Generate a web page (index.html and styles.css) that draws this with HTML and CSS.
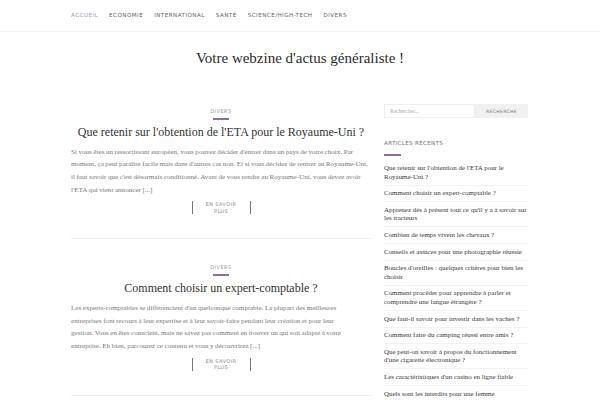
FILE: index.html
```html
<!DOCTYPE html>
<html lang="fr">
<head>
<meta charset="utf-8">
<title>Votre webzine d'actus généraliste !</title>
<link rel="stylesheet" href="styles.css">
</head>
<body>
<header class="topbar">
  <nav class="nav">
    <a class="nav-item active" href="#">Accueil</a>
    <a class="nav-item" href="#">Economie</a>
    <a class="nav-item" href="#">International</a>
    <a class="nav-item" href="#">Santé</a>
    <a class="nav-item" href="#">Science/High-Tech</a>
    <a class="nav-item" href="#">Divers</a>
  </nav>
</header>
<h1 class="site-title">Votre webzine d'actus généraliste !</h1>
<div class="wrap">
  <main class="main">
    <article class="post">
      <div class="cat">Divers</div>
      <div class="cat-line"></div>
      <h2 class="post-title">Que retenir sur l'obtention de l'ETA pour le Royaume-Uni ?</h2>
      <p class="excerpt">Si vous êtes un ressortissant européen, vous pouvez décider d'entrer dans un pays de votre choix. Par moment, ça peut paraître facile mais dans d'autres cas non. Et si vous décidez de rentrer au Royaume-Uni, il faut savoir que c'est désormais conditionné. Avant de vous rendre au Royaume-Uni, vous devez avoir l'ETA qui vient annoncer [...]</p>
      <div class="more-wrap"><a class="more" href="#">En savoir<br>plus</a></div>
    </article>
    <article class="post">
      <div class="cat">Divers</div>
      <div class="cat-line"></div>
      <h2 class="post-title">Comment choisir un expert-comptable ?</h2>
      <p class="excerpt">Les experts-comptables se différencient d'un quelconque comptable. La plupart des meilleures<br>entreprises font recours à leur expertise et à leur savoir-faire pendant leur création et pour leur<br>gestion. Vous en êtes conscient, mais ne savez pas comment en trouver un qui soit adapté à votre<br>entreprise. Eh bien, parcourez ce contenu et vous y découvrirez [...]</p>
      <div class="more-wrap"><a class="more" href="#">En savoir<br>plus</a></div>
    </article>
  </main>
  <aside class="side">
    <form class="search">
      <input class="search-input" type="text" placeholder="Rechercher...">
      <button class="search-btn" type="button">Recherche</button>
    </form>
    <h3 class="widget-title">Articles récents</h3>
    <div class="widget-line"></div>
    <ul class="recent">
      <li>Que retenir sur l'obtention de l'ETA pour le Royaume-Uni ?</li>
      <li>Comment choisir un expert-comptable ?</li>
      <li>Apprenez dès à présent tout ce qu'il y a à savoir sur les tracteurs</li>
      <li>Combien de temps vivent les chevaux ?</li>
      <li>Conseils et astuces pour une photographie réussie</li>
      <li>Boucles d'oreilles : quelques critères pour bien les choisir</li>
      <li>Comment procéder pour apprendre à parler et comprendre une langue étrangère ?</li>
      <li>Que faut-il savoir pour investir dans les vaches ?</li>
      <li>Comment faire du camping réussi entre amis ?</li>
      <li>Que peut-on savoir à propos du fonctionnement d'une cigarette électronique ?</li>
      <li>Les caractéristiques d'un casino en ligne fiable</li>
      <li>Quels sont les interdits pour une femme<br>enceinte ?</li>
    </ul>
  </aside>
</div>
</body>
</html>
```

FILE: styles.css
```css
html, body {
  margin: 0;
  padding: 0;
  background: #fff;
  overflow: hidden;
}
body {
  font-family: "Liberation Serif", "Times New Roman", serif;
  color: #333;
}
.topbar {
  height: 32px;
  border-bottom: 1px solid #f3f3f3;
  box-sizing: border-box;
}
.nav {
  display: flex;
  padding: 12px 0 0 71px;
  gap: 11px;
}
.nav-item {
  font-family: "DejaVu Sans", sans-serif;
  font-size: 5.6px;
  letter-spacing: 0.45px;
  text-transform: uppercase;
  color: #666;
  text-decoration: none;
  line-height: 7px;
}
.nav-item.active {
  color: #ad96b8;
}
.site-title {
  margin: 17px 0 0;
  text-align: center;
  font-weight: normal;
  font-size: 15px;
  line-height: 18px;
  color: #2a2a2a;
}
.wrap {
  display: flex;
  gap: 13px;
  padding-left: 71px;
  margin-top: 32px;
}
.main {
  width: 300px;
}
.post {
  border-bottom: 1px solid #eee;
  text-align: center;
  padding-top: 9px;
  padding-bottom: 24px;
}
.post + .post {
  padding-top: 25px;
}
.cat {
  font-family: "DejaVu Sans", sans-serif;
  font-size: 5px;
  letter-spacing: 0.5px;
  text-transform: uppercase;
  color: #999;
  line-height: 7px;
}
.cat-line {
  width: 16px;
  height: 1.5px;
  background: #8d6f9d;
  margin: 3px auto 0;
}
.post-title {
  margin: 4px 0 0;
  font-weight: normal;
  font-size: 12px;
  line-height: 16px;
  color: #333;
}
.excerpt {
  margin: 6px 0 0;
  text-align: left;
  font-size: 7.1px;
  word-spacing: -0.25px;
  line-height: 12.7px;
  color: #7a7a7a;
}
.more-wrap {
  margin-top: 5px;
  display: flex;
  justify-content: center;
}
.more {
  display: block;
  width: 57px;
  border-left: 1.5px solid #777;
  border-right: 1.5px solid #777;
  font-family: "DejaVu Sans", sans-serif;
  font-size: 5px;
  letter-spacing: 0.4px;
  line-height: 6.5px;
  text-transform: uppercase;
  text-decoration: none;
  color: #8a8a8a;
  text-align: center;
}
.side {
  width: 144px;
  padding-top: 5px;
}
.search {
  display: flex;
  margin: 0;
}
.search-input {
  width: 91px;
  height: 14px;
  box-sizing: border-box;
  border: 1px solid #eee;
  padding: 0 5px;
  font-family: "Liberation Serif", serif;
  font-size: 5.5px;
  color: #999;
  outline: none;
  margin: 0;
}
.search-input::placeholder {
  color: #aaa;
}
.search-btn {
  width: 53px;
  height: 14px;
  border: none;
  background: #f1f1f1;
  font-family: "DejaVu Sans", sans-serif;
  font-size: 4.6px;
  letter-spacing: 0.3px;
  text-transform: uppercase;
  color: #777;
  padding: 0;
  margin: 0;
}
.widget-title {
  margin: 22px 0 0;
  font-family: "DejaVu Sans", sans-serif;
  font-weight: normal;
  font-size: 5.6px;
  letter-spacing: 0.3px;
  text-transform: uppercase;
  color: #777;
  line-height: 7px;
}
.widget-line {
  width: 17px;
  height: 1.5px;
  background: #8d6f9d;
  margin-top: 7px;
}
.recent {
  list-style: none;
  margin: 5px 0 0;
  padding: 0;
}
.recent li {
  font-size: 6.95px;
  line-height: 8.6px;
  color: #3a3a3a;
  padding: 3.5px 0;
  border-bottom: 1px solid #f3f3f3;
}
```
